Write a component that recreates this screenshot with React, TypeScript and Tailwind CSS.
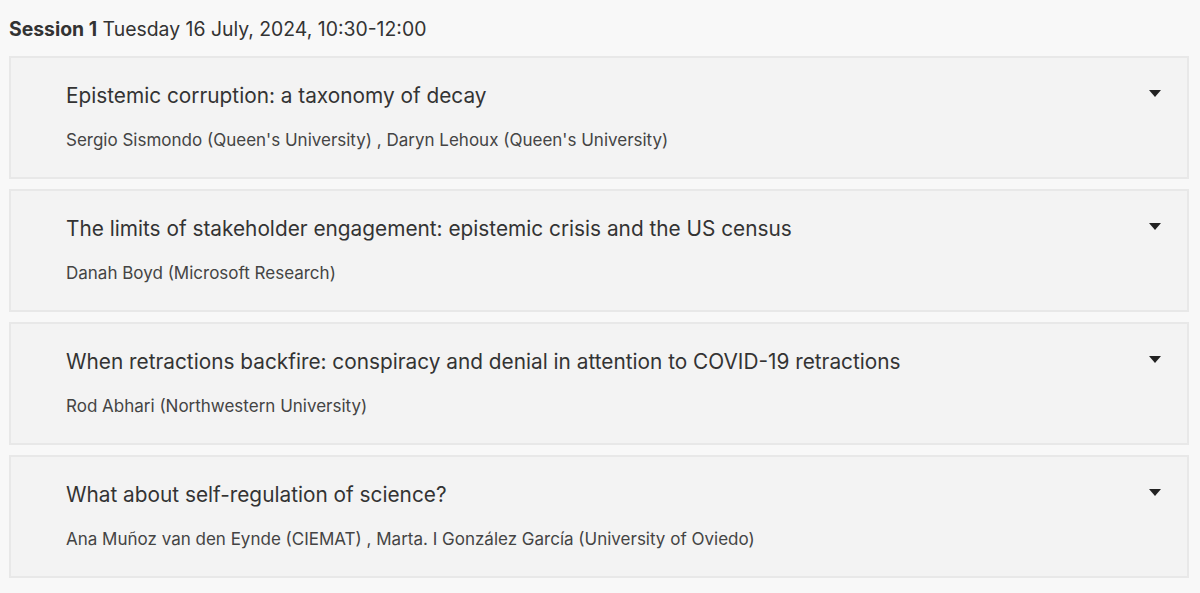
const talks = [
  {
    title: 'Epistemic corruption: a taxonomy of decay',
    authors: "Sergio Sismondo (Queen's University) , Daryn Lehoux (Queen's University)",
  },
  {
    title: 'The limits of stakeholder engagement: epistemic crisis and the US census',
    authors: 'Danah Boyd (Microsoft Research)',
  },
  {
    title: 'When retractions backfire: conspiracy and denial in attention to COVID-19 retractions',
    authors: 'Rod Abhari (Northwestern University)',
  },
  {
    title: 'What about self-regulation of science?',
    authors: 'Ana Muñoz van den Eynde (CIEMAT) , Marta. I González García (University of Oviedo)',
  },
];

export default function App() {
  return (
    <main className="min-h-[593px] w-full bg-[#f8f8f8] text-[#333] font-['Inter','Liberation_Sans',sans-serif] px-[9px] pt-[16px]">
      <h2 className="text-[19.4px] leading-[26px] mb-[14px]">
        <span className="font-bold">Session 1</span> Tuesday 16 July, 2024, 10:30-12:00
      </h2>
      <div className="flex flex-col gap-[10px] w-[1180px]">
        {talks.map((t) => (
          <div key={t.title} className="relative h-[123px] bg-[#f3f3f3] border-2 border-[#e8e8e8] pl-[55px] pt-[24px]">
            <div className="text-[20.8px] leading-[28px] text-[#333]">{t.title}</div>
            <div className="mt-[19px] text-[17px] leading-[22px] text-[#444]">{t.authors}</div>
            <svg className="absolute right-[26px] top-[32px]" width="12" height="7" viewBox="0 0 12 7">
              <path d="M0 0h12L6 7z" fill="#222" />
            </svg>
          </div>
        ))}
      </div>
    </main>
  );
}
